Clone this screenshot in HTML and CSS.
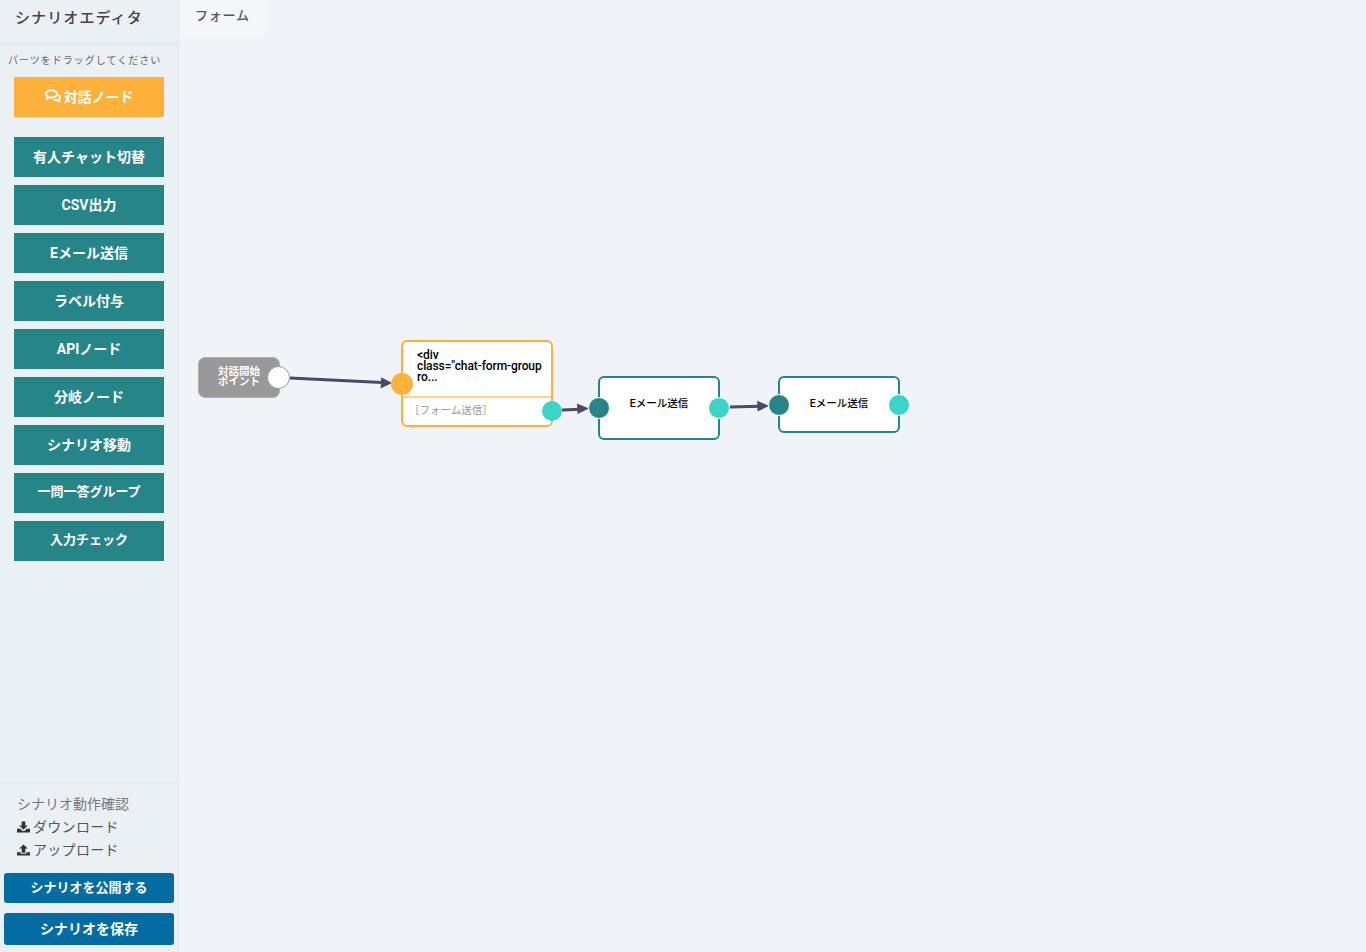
FILE: index.html
```html
<!DOCTYPE html>
<html lang="ja">
<head>
<meta charset="utf-8">
<title>シナリオエディタ</title>
<link rel="stylesheet" href="styles.css">
</head>
<body>
<div class="app">
  <aside class="sidebar">
    <header class="side-head">シナリオエディタ</header>
    <div class="parts">
      <p class="hint">パーツをドラッグしてください</p>
      <div class="part part-orange">
        <svg class="ico-chat" viewBox="0 0 16 14" aria-hidden="true"><path d="M6.500 1.300C3.400 1.300 1 2.900 1 5c0 1.100.7 2.100 1.800 2.800l-.5 1.700 2.200-1.100c.6.100 1.300.2 2 .2 3.100 0 5.500-1.600 5.500-3.600S9.600 1.300 6.500 1.300z" fill="none" stroke="#fff" stroke-width="2"/><path d="M13 6c1.300.5 2.100 1.300 2.100 2.300 0 .9-.5 1.600-1.300 2.100l.5 1.800-2.300-1.100c-1.100.2-2.600 0-3.600-.7" fill="none" stroke="#fff" stroke-width="1.800"/></svg>
        <span>対話ノード</span>
      </div>
      <div class="part-list">
        <div class="part">有人チャット切替</div>
        <div class="part">CSV出力</div>
        <div class="part">Eメール送信</div>
        <div class="part">ラベル付与</div>
        <div class="part">APIノード</div>
        <div class="part">分岐ノード</div>
        <div class="part">シナリオ移動</div>
        <div class="part part-small">一問一答グループ</div>
        <div class="part part-small">入力チェック</div>
      </div>
    </div>
    <div class="side-foot">
      <ul class="links">
        <li class="link-muted">シナリオ動作確認</li>
        <li><svg class="ico-io" viewBox="0 0 14 12" aria-hidden="true"><path d="M5 0h4v4.500h2.500L7 9 2.500 4.500H5z"/><path d="M0 8h3.500L6 10.300h2L10.500 8H14v4H0z"/></svg>ダウンロード</li>
        <li><svg class="ico-io" viewBox="0 0 14 12" aria-hidden="true"><path d="M7 0l4.500 4.500H9V9H5V4.500H2.500z"/><path d="M0 8.500h4V10h6V8.500h4V12H0z"/></svg>アップロード</li>
      </ul>
      <button class="action action-publish">シナリオを公開する</button>
      <button class="action action-save">シナリオを保存</button>
    </div>
  </aside>
  <main class="main">
    <nav class="tabs"><div class="tab">フォーム</div></nav>
    <div class="canvas">
      <svg class="edges" width="1187" height="952" viewBox="179 0 1187 952" aria-hidden="true">
        <g fill="none" stroke="#4a4a68" stroke-width="3">
          <path d="M290 378L382 382.600"/>
          <path d="M562 410L580 409.200"/>
          <path d="M730 407L760 406.200"/>
        </g>
        <g fill="#4a4a68">
          <path d="M392 383L380.600 388.400L381.200 377.200z"/>
          <path d="M589 408.500L577.500 414L577 403.500z"/>
          <path d="M769 406L757.500 411.500L757.200 400.700z"/>
        </g>
      </svg>

      <div class="node node-start">
        <div class="start-label">対話開始<br>ポイント</div>
        <span class="port port-start"></span>
      </div>

      <div class="node node-talk">
        <div class="talk-body">&lt;div<br>class="chat-form-group<br>ro...</div>
        <div class="talk-option">［フォーム送信］</div>
        <span class="port port-talk-in"></span>
        <span class="port port-talk-out"></span>
      </div>

      <div class="node node-mail node-mail-a">
        <div class="mail-label">Eメール送信</div>
        <span class="port port-mail-in"></span>
        <span class="port port-mail-out"></span>
      </div>

      <div class="node node-mail node-mail-b">
        <div class="mail-label">Eメール送信</div>
        <span class="port port-mail-in"></span>
        <span class="port port-mail-out"></span>
      </div>
    </div>
  </main>
</div>
</body>
</html>
```
FILE: styles.css
```css
* { box-sizing: border-box; }
html, body { margin: 0; height: 100%; }
body {
  font-family: Roboto, "Noto Sans CJK JP", sans-serif;
  background: #f0f4f8;
  color: #333;
  overflow: hidden;
}
.app { display: flex; height: 952px; }

.sidebar {
  width: 179px;
  flex: none;
  display: flex;
  flex-direction: column;
  background: #ebf0f5;
  border-right: 1px solid #e2e8ed;
}
.side-head {
  height: 45px;
  padding: 6px 0 0 15px;
  font-size: 15px;
  line-height: 24px;
  font-weight: 500;
  letter-spacing: 1.1px;
  color: #444;
  border-bottom: 3px solid #e3e8ec;
}
.parts { flex: 1; }
.hint {
  margin: 0;
  padding: 8px 0 0 8px;
  height: 32px;
  font-size: 10px;
  line-height: 15px;
  letter-spacing: 1px;
  color: #666;
  white-space: nowrap;
}
.part {
  width: 150px;
  height: 40px;
  display: flex;
  align-items: center;
  justify-content: center;
  padding-bottom: 2px;
  background: #258589;
  color: #fff;
  font-size: 14px;
  font-weight: 700;
  white-space: nowrap;
}
.part-small { font-size: 13px; padding-bottom: 6px; }
.part-orange {
  margin-left: 14px;
  background: #fdb03a;
}
.ico-chat { width: 16px; height: 14px; margin-right: 3px; }
.part-list {
  margin: 20px 0 0 14px;
  display: flex;
  flex-direction: column;
  gap: 8px;
}

.side-foot {
  height: 169px;
  border-top: 1px solid #e2e8ed;
  padding: 9px 4px 0;
}
.links {
  list-style: none;
  margin: 0;
  padding: 0 0 0 13px;
  height: 80px;
  font-size: 14px;
  line-height: 23px;
  letter-spacing: 0.3px;
  color: #555;
}
.links li { height: 23px; }
.link-muted { color: #777; letter-spacing: 0; }
.ico-io { width: 13px; height: 12px; margin-right: 3px; fill: #333; vertical-align: -1px; }
.action {
  display: block;
  width: 170px;
  border: 0;
  border-radius: 3px;
  background: #026ca3;
  color: #fff;
  font-family: inherit;
  font-weight: 700;
  font-size: 13px;
  padding: 0;
}
.action-publish { height: 30px; margin-bottom: 10px; padding-bottom: 3px; }
.action-save { height: 32px; font-size: 14px; padding-bottom: 2px; }

.main { flex: 1; min-width: 0; display: flex; flex-direction: column; position: relative; }
.tabs { height: 36px; display: flex; }
.tab {
  width: 86px;
  height: 36px;
  background: #f4f7fa;
  padding-top: 5px;
  padding-left: 16px;
  font-size: 13px;
  line-height: 22px;
  font-weight: 500;
  letter-spacing: 0.8px;
  color: #555;
}
.canvas { position: absolute; inset: 0; }
.edges { position: absolute; left: 0; top: 0; }

.node { position: absolute; }
.port { position: absolute; border-radius: 50%; }

.node-start {
  left: 19px; top: 357px;
  width: 82px; height: 41px;
  border: 1px solid #b0b0b0;
  border-radius: 7px;
  background: #999;
}
.start-label {
  width: 80px;
  padding-top: 9px;
  text-align: center;
  font-size: 10.500px;
  line-height: 10px;
  font-weight: 700;
  color: #fff;
}
.port-start {
  left: 68px; top: 8px;
  width: 23px; height: 23px;
  background: #fff;
  border: 1px solid #999;
}

.node-talk {
  left: 222px; top: 340px;
  width: 152px; height: 87px;
  background: #fff;
  border: 2px solid #fdb03a;
  border-radius: 6px;
  color: #000;
}
.talk-body {
  height: 54px;
  padding: 8px 0 0 14px;
  font-size: 12px;
  line-height: 11px;
  font-weight: 500;
  letter-spacing: -0.1px;
  white-space: nowrap;
}
.talk-option {
  height: 29px;
  border-top: 2px solid #fed490;
  padding-left: 6px;
  font-size: 10.500px;
  line-height: 26px;
  color: #999;
}
.port-talk-in {
  left: -12px; top: 31px;
  width: 22px; height: 22px;
  background: #fdb03a;
}
.port-talk-out {
  left: 139px; top: 59px;
  width: 20px; height: 20px;
  background: #3bd4c6;
}

.node-mail {
  width: 122px;
  background: #fff;
  border: 2px solid #258589;
  border-radius: 6px;
  color: #000;
}
.node-mail-a { left: 419px; top: 376px; height: 64px; }
.node-mail-b { left: 599px; top: 376px; height: 57px; }
.mail-label {
  padding-top: 17px;
  text-align: center;
  font-size: 10.500px;
  line-height: 18px;
  font-weight: 500;
}
.port-mail-in, .port-mail-out {
  width: 22px; height: 22px;
  border: 1px solid #fff;
}
.port-mail-in { left: -12px; background: #258589; }
.port-mail-out { left: 108px; background: #3bd4c6; }
.node-mail-a .port { top: 19px; }
.node-mail-b .port { top: 16px; }
```
